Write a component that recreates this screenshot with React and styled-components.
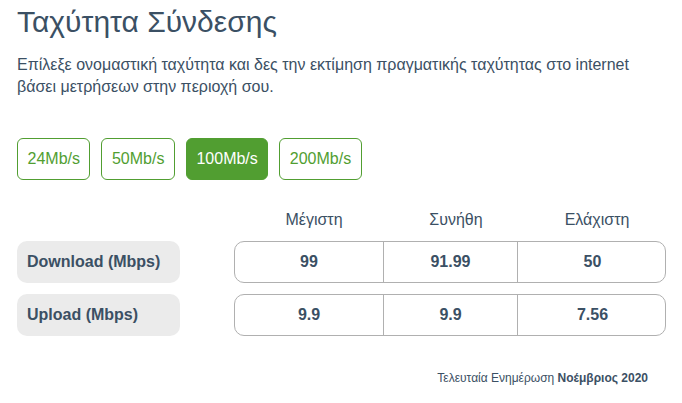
import React, { useState } from "react";
import styled, { createGlobalStyle } from "styled-components";

const Global = createGlobalStyle`
  html, body { margin: 0; padding: 0; background: #fff; }
  body { font-family: "Liberation Sans", Arial, sans-serif; color: #3b5064; }
`;

const Page = styled.div`
  padding: 0 16px 0 17px;
  width: 682px;
  box-sizing: border-box;
`;

const Title = styled.h1`
  margin: 0;
  padding-top: 4px;
  font-size: 30px;
  font-weight: normal;
  line-height: 36px;
  color: #3b5064;
`;

const Desc = styled.p`
  margin: 14px 0 0;
  font-size: 16px;
  line-height: 22px;
  color: #3b5064;
`;

const Speeds = styled.div`
  display: flex;
  gap: 11px;
  margin-top: 40px;
`;

const SpeedButton = styled.button`
  height: 42px;
  padding: 0 9.5px;
  border-radius: 6px;
  border: 1px solid #519e31;
  background: ${(p) => (p.$active ? "#519e31" : "#fff")};
  color: ${(p) => (p.$active ? "#fff" : "#519e31")};
  font-family: "Liberation Sans", Arial, sans-serif;
  font-size: 16px;
  cursor: pointer;
  box-sizing: border-box;
`;

const Table = styled.div`
  margin-top: 29px;
  display: grid;
  grid-template-columns: 163px 54px 148px 134px 150px;
  row-gap: 11px;
`;

const Head = styled.div`
  text-align: center;
  font-size: 16px;
  line-height: 22px;
  padding-left: ${(p) => p.$shift || 0}px;
  margin-bottom: -1px;
`;

const Label = styled.div`
  grid-column: 1;
  height: 42px;
  display: flex;
  align-items: center;
  padding-left: 10px;
  background: #ebebeb;
  border-radius: 10px;
  font-size: 16px;
  font-weight: bold;
`;

const Values = styled.div`
  grid-column: 3 / span 3;
  display: grid;
  grid-template-columns: 148px 134px 150px;
  height: 42px;
  border: 1px solid #b0b0b0;
  border-radius: 10px;
  box-sizing: border-box;
`;

const Value = styled.div`
  display: flex;
  align-items: center;
  justify-content: center;
  font-size: 16px;
  font-weight: bold;
  border-left: ${(p) => (p.$first ? "none" : "1px solid #b0b0b0")};
`;

const Footer = styled.div`
  margin-top: 34px;
  text-align: right;
  padding-right: 18px;
  font-size: 12px;
  line-height: 16px;
  b { font-weight: bold; }
`;

const speeds = ["24Mb/s", "50Mb/s", "100Mb/s", "200Mb/s"];

const rows = [
  { label: "Download (Mbps)", v: ["99", "91.99", "50"] },
  { label: "Upload (Mbps)", v: ["9.9", "9.9", "7.56"] },
];

export default function App() {
  const [sel, setSel] = useState(2);
  return (
    <Page>
      <Global />
      <Title>Ταχύτητα Σύνδεσης</Title>
      <Desc>
        Επίλεξε ονομαστική ταχύτητα και δες την εκτίμηση πραγματικής ταχύτητας στο internet
        <br />
        βάσει μετρήσεων στην περιοχή σου.
      </Desc>
      <Speeds>
        {speeds.map((s, i) => (
          <SpeedButton key={s} $active={i === sel} onClick={() => setSel(i)}>
            {s}
          </SpeedButton>
        ))}
      </Speeds>
      <Table>
        <div />
        <div />
        <Head $shift={12}>Μέγιστη</Head>
        <Head $shift={14}>Συνήθη</Head>
        <Head $shift={12}>Ελάχιστη</Head>
        {rows.map((r) => (
          <React.Fragment key={r.label}>
            <Label>{r.label}</Label>
            <Values>
              {r.v.map((v, i) => (
                <Value key={i} $first={i === 0}>{v}</Value>
              ))}
            </Values>
          </React.Fragment>
        ))}
      </Table>
      <Footer>
        Τελευταία Ενημέρωση <b>Νοέμβριος 2020</b>
      </Footer>
    </Page>
  );
}
